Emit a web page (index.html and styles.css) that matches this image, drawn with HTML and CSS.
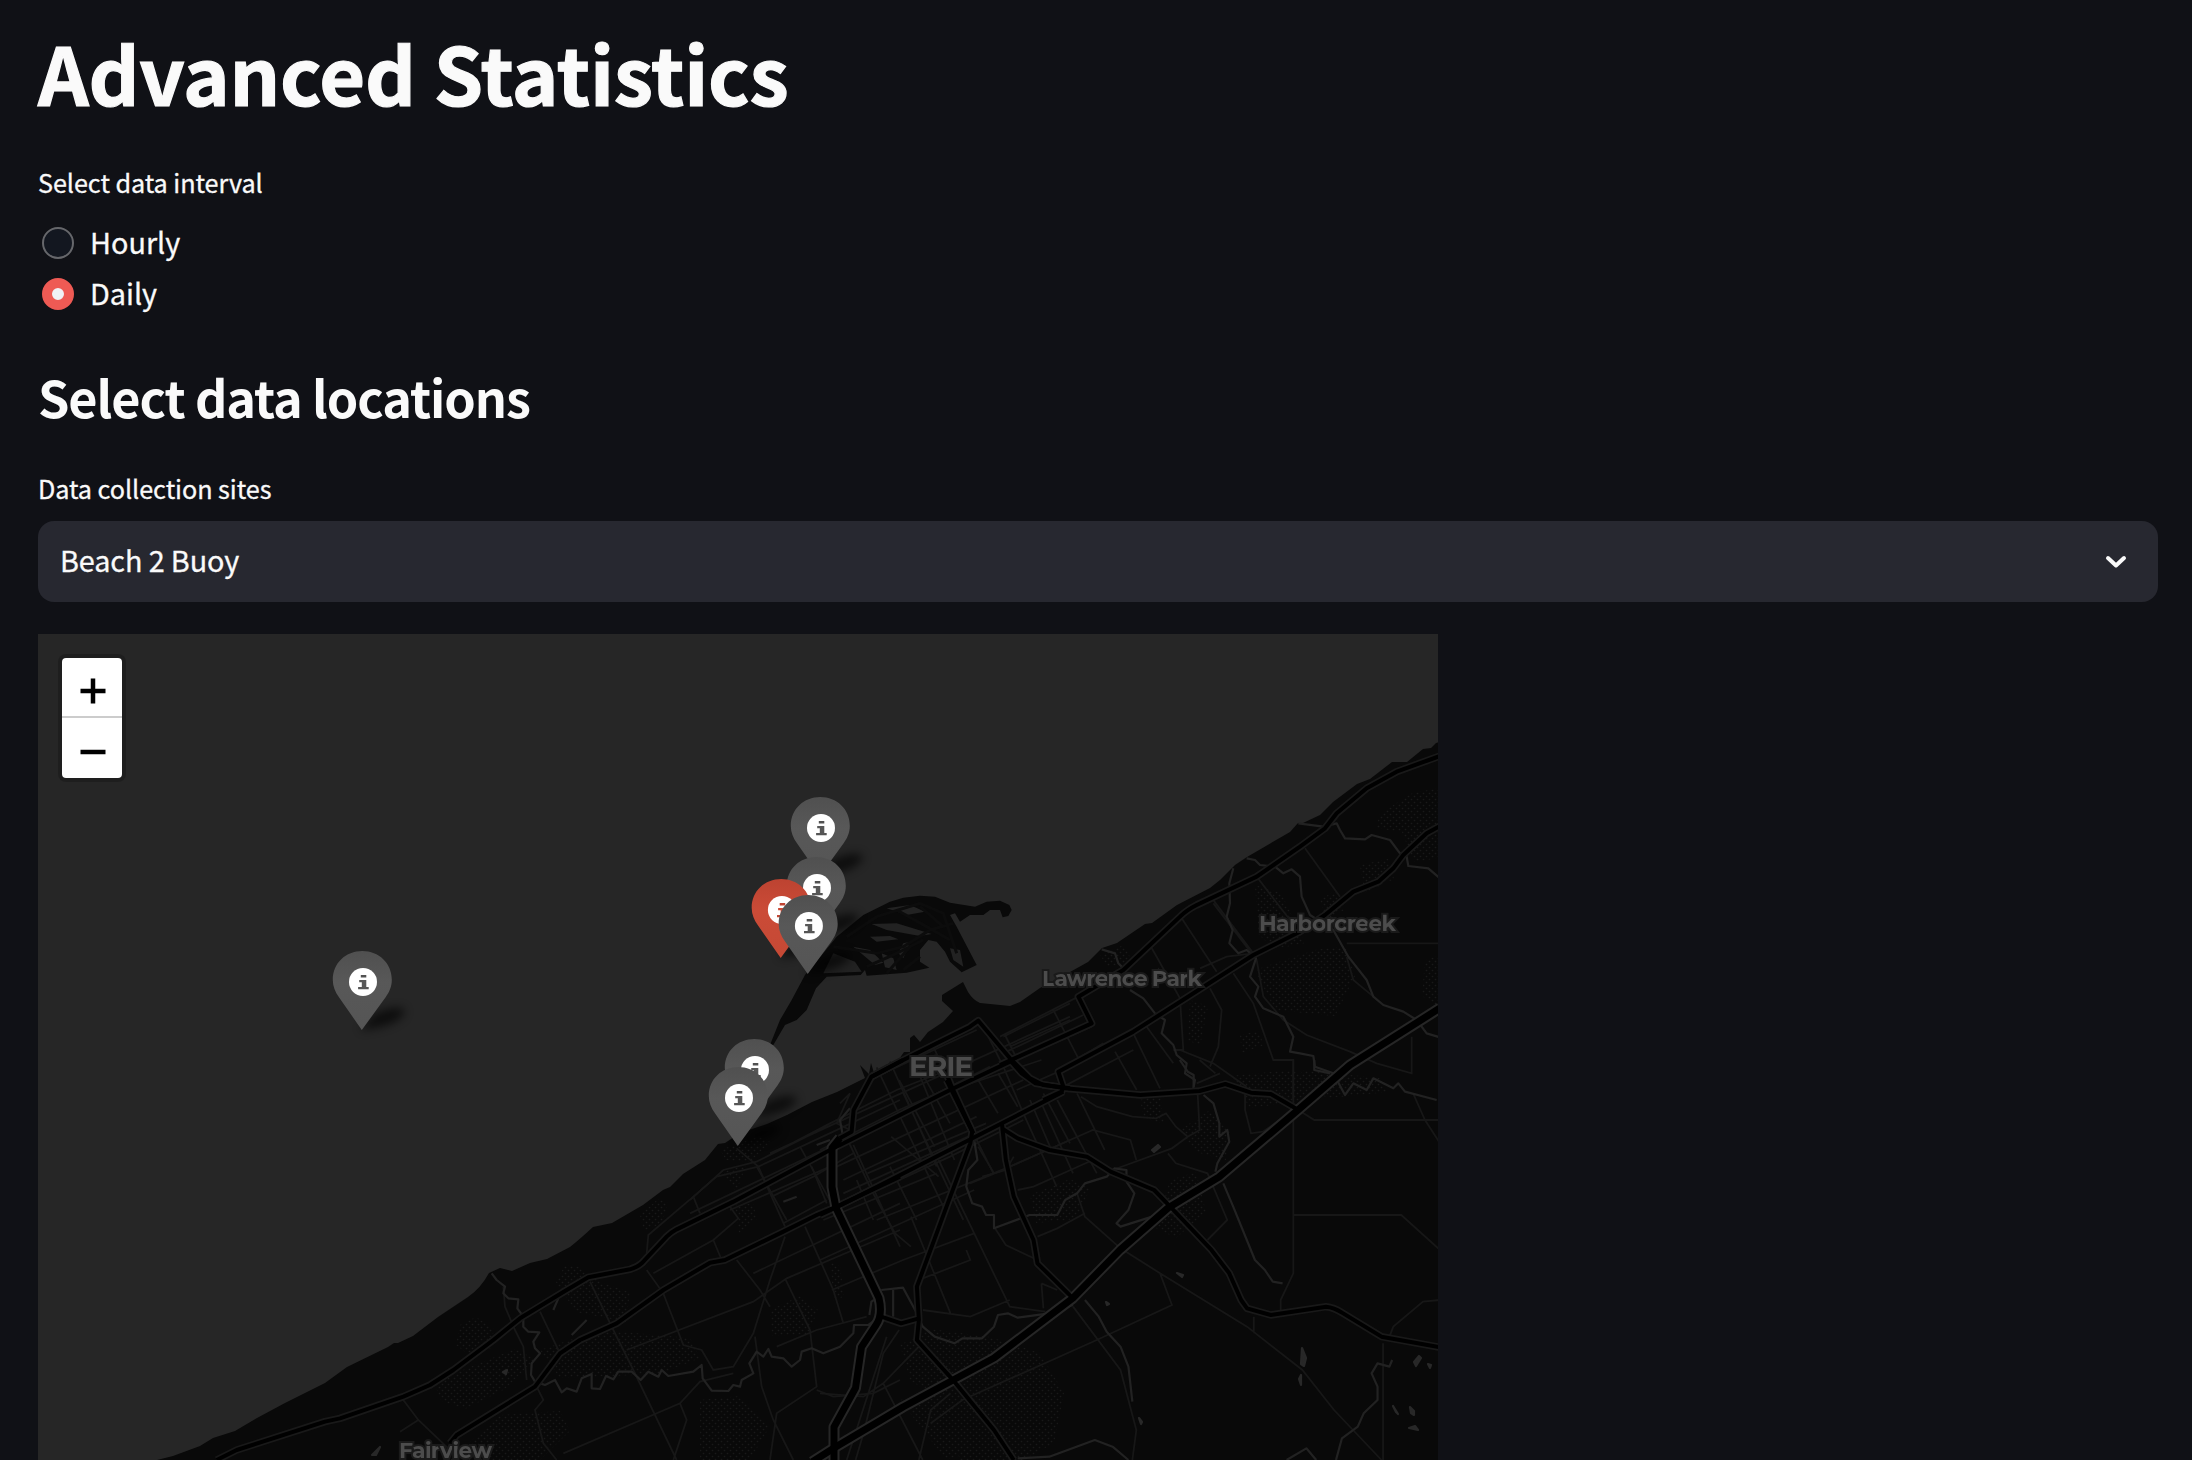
FILE: index.html
```html
<!DOCTYPE html>
<html lang="en">
<head>
<meta charset="utf-8">
<title>Advanced Statistics</title>
<link rel="stylesheet" href="styles.css">
</head>
<body>
<main class="page">
  <h1 class="title">Advanced Statistics</h1>

  <div class="radio-group" role="radiogroup">
    <div class="label">Select data interval</div>
    <div class="option"><span class="radio"></span><span>Hourly</span></div>
    <div class="option"><span class="radio checked"></span><span>Daily</span></div>
  </div>

  <h2 class="subtitle">Select data locations</h2>

  <div class="label site-label">Data collection sites</div>
  <div class="select">
    <span class="value">Beach 2 Buoy</span>
    <svg class="chevron" width="22" height="14" viewBox="0 0 22 14"><path d="M3 3l8 7.5L19 3"/></svg>
  </div>

  <div class="map">
    <svg class="tiles" width="1400" height="826" viewBox="38 634 1400 826">
      <defs>
        <pattern id="woods" width="6" height="6" patternUnits="userSpaceOnUse">
          <circle cx="1.5" cy="1.5" r=".8" fill="#191919"/><circle cx="4.5" cy="4.5" r=".8" fill="#191919"/>
        </pattern>
        <filter id="soft" x="-50%" y="-50%" width="200%" height="200%"><feGaussianBlur stdDeviation="5"/></filter>
        <linearGradient id="grey" x1="0" y1="0" x2="0" y2="1"><stop offset="0" stop-color="#505050"/><stop offset=".4" stop-color="#585858"/><stop offset="1" stop-color="#555"/></linearGradient>
        <linearGradient id="red" x1="0" y1="0" x2="0" y2="1"><stop offset="0" stop-color="#bd4331"/><stop offset=".4" stop-color="#cb4b37"/><stop offset="1" stop-color="#c54935"/></linearGradient>

        <g id="roads">
          <g transform="translate(400 1060) scale(.33333)">
            <path d="M-550 1200L-490 1170L-225 1085L-180 1075L10 1010L90 975L160 930L280 840L360 775L500 690L565 652L690 628Q712 622 725 610L800 530Q812 518 830 508L1000 425L1290 270L1650 90L1830 5"/>
            <path d="M150 1150L170 1125L405 980L480 880L540 840L650 790L790 690L930 608L975 600L1150 515L1250 465L1310 440L1500 350"/>
          </g>
          <g transform="translate(1000 730) scale(.33333)">
            <path d="M0 1005L275 880L235 800L370 720L540 560Q560 540 590 525L770 440L900 350L975 295L1010 250L1100 175L1190 125L1320 78"/>
            <path d="M130 1110L185 1085L190 1070L175 1025L400 905L760 675L900 605L975 555L1060 485L1135 455L1180 415L1210 375L1280 310L1320 288"/>
          </g>
          <g transform="translate(820 1060) scale(.39541 .33333)">
            <path d="M0 465L45 440L460 190L615 95"/>
            <path d="M480 0L510 40L545 70L620 85L810 105L960 93L1025 72L1090 98L1140 102L1210 150"/>
            <path d="M320 60L385 215L380 250L320 440L245 680L250 780L245 840L340 965L440 1110L490 1200"/>
            <path d="M460 190L470 300L490 410L540 540L550 610L640 715"/>
            <path d="M460 205L500 235L580 270L675 290L735 335L845 390L890 445L990 570L1035 640L1065 720L1080 745L1140 765L1280 740Q1300 742 1320 758L1420 830L1568 862"/>
            <path d="M155 770L205 790L250 775M50 235L80 215L85 150L130 50L210 0"/>
          </g>
          <g transform="translate(690 980) scale(.33333)">
            <path d="M545 290L640 240L740 190L840 140L865 122L960 235L1020 295L1060 315L1140 325M765 270L785 320L850 460"/>
          </g>
        </g>
        <g id="highways">
          <path d="M834 1460V1427L855.500 1388L861.500 1347L876 1325Q883 1315 879 1298L836 1208L832 1187V1148L840 1138"/>
          <path d="M812 1462L834 1448L903 1407L994 1358L1073 1298L1120 1250L1168 1208L1219 1177L1298 1110L1350 1065L1440 1008"/>
        </g>

        <g id="pin-mark">
          <circle cx="1.200" cy="-48" r="14" fill="#fff"/>
          <path d="M-1 -55h5.500v2.500H-1zM-2.600 -50h7.100v7h2.400v2.200H-3.700V-43H0v-4.800h-2.600z"/>
        </g>
        <path id="pin-body" d="M0 0L-23 -33C-26.500 -38 -29 -43.500 -29 -50C-29 -67 -16 -79 .5 -79S30 -67 30 -50C30 -43.500 27.500 -38 24 -33Z"/>
        <path id="pin-shadow" d="M-2 0L11 -15Q30 -25 42 -21Q46 -14 28 -6Q14 -1 -2 0Z"/>
      </defs>

      <g class="basemap">
      <path class="land" d="M157 1460L173 1456L200 1446L213 1438L235 1431L257 1418L285 1403L325 1383L347 1367L388 1347L394 1343L398 1343L413 1336L438 1317L468 1297Q481 1288 489 1273L500 1268L512 1271L530 1263L547 1259L570 1247Q580 1239 593 1227L612 1223L643 1205L663 1190L670 1187L683 1174L705 1160L718 1144L725 1143L740 1133L767 1124L787 1115L812 1102L837 1092L865 1078L860 1065L869 1074L871 1063L874 1073L897 1062L904 1052L910 1052V1038L914 1035L920 1042L928 1032L943 1022L953 1011L942 1001V995L963 982L968 992Q973 1000 980 1003L1010 1006L1020 1002L1040 988L1070 972L1088 962L1102 948L1117 943L1145 924L1152 923L1177 905L1210 888L1220 880L1235 865L1247 857L1290 832L1298 823H1303L1320 815L1333 802L1357 784L1370 779L1392 762H1407L1423 749L1431 748L1436 743L1446 740V1470H157Z"/>

      <g transform="translate(690 780) scale(.33333)">
        <path class="land" d="M240 795L270 720L305 660L345 585L400 520L440 470L520 405L600 365L640 353L690 347L735 350L780 368L855 380L890 365L930 362L958 375L965 390L955 408L938 412L930 390L900 390L880 405L840 405L810 425L795 400L780 405L800 440L860 555L815 577L780 545L765 515L740 485L715 480L690 510L690 545L718 563L650 578L530 587L525 570L512 585L410 590L378 625L350 690L320 720L285 735L250 795Z"/>
        <path class="water" d="M430 520L495 545L515 575L400 580ZM545 432L620 430L725 462L690 468L590 450ZM490 500L540 510L580 548L555 555ZM590 385L660 375L705 395L650 405ZM575 520L610 535L620 570L585 562ZM780 505L810 510L820 560L790 540ZM540 470L600 468L625 478L560 485ZM640 490L660 485L640 535L625 520Z"/>
        <path class="ink" d="M430 500L560 520L640 500L720 450L790 430M470 470L560 410L690 370L760 400L800 520M530 560L610 525L700 480M590 580L660 500M690 380L760 440M620 390L710 440L780 480M640 570L690 530"/>
      </g>

      <g class="woods" fill="url(#woods)">
        <path d="M460 1325l16-8 18 12-4 20-18 8-16-12zM435 1385l30-16 50-20 20 10-30 30-40 20-24-8zM500 1415l60-4 10 20-30 29h-90zM565 1265l15 2 20 15 30 10-4 30-50-10-20-30zM640 1215l18-16 10 4-6 20-18 8zM720 1150l40-14 10 6-20 20-24-2zM720 1170l26-4-10 26zM735 1205l18-2 4 16-18 14zM540 1350l60-20 90 8 10 20-40 16-100 4zM770 1310l30-14 18 14-10 24-36 2zM700 1400l40-4 30 30-20 34h-50zM830 1262l10 4 4 30-10 6z"/>
        <path d="M900 1345l30-16 60 8 50 16 24 40-10 50-30 17H960l-20-60-30-20zM900 1400l60-10 16 60-30 10zM1030 1195l40-16 20 10-14 30-40 4zM1180 1130l30-20 20 20-4 30-30-8zM1170 1180l26-8 10 40-30 26-20-10zM1230 1076l60-6 30 10-10 20-60 8zM1300 1070l80 8 8 14-60 6-20-10zM1380 814l30-20 28-6v70l-24 4-12-30-26-4zM1360 865l28-6 6 20-30 14zM1255 885l26 8 24 50-30 6-16-14zM1255 970l60-20 30-4 10 30-20 40-60-6zM1320 900l16-10 8 20-18 10zM1240 1035l18-4 6 14-22 8zM1190 1000l18 6-8 40-12-6zM1100 955l24-10 8 16-24 6zM1140 1100l20-6 4 30-20-6zM1425 960l13-4v50l-16-10z"/>
      </g>

      <g class="minor">
        <g transform="translate(400 1060) scale(.33333)">
          <path d="M10 1020L55 1080L155 1175M0 1115L55 1080M310 680L315 740L345 810L370 860L380 960M420 755L475 870M570 665L640 810L700 930L830 1200M740 630L790 700L850 855L905 870L940 930L1000 920L1060 820L1110 660L1155 530M680 870L1060 725L1160 655L1500 510M740 580L745 525L880 410L950 350L1075 320L1300 215L1500 120M880 410L900 460M940 540L965 600M1010 265L1075 320L1155 500M1010 600L1080 690L1110 740M1115 410L1240 350L1360 280M1150 490L1280 420M1155 655L1230 810L1250 980L1130 1060L1110 1200M1065 830L1085 980L1120 1080L1180 1200M1215 500L1300 690L1330 790M1235 320L1280 430M1360 255L1500 560M1060 640L1500 430M470 1200L430 1150L405 1050L430 1020L410 980M490 1180L840 1030L900 965L1000 940M840 1030L860 1080L820 1200M990 440L1015 475L940 540L760 640M1130 860L1250 810L1400 770M1250 990L1300 1010L1420 1000L1500 960M1340 1200L1460 830"/>
        </g>
        <g transform="translate(690 980) scale(.33333)">
          <path d="M0 660L100 570L200 545L360 465L600 355L1140 110M210 540L420 430L620 330L850 240M240 520L480 410M560 262L640 430L760 680M600 245L740 560M640 340L820 720M200 560L290 720M330 500L430 680M440 560L1000 300M460 600L860 410M460 640L900 440M540 640L780 530L1000 420M450 370L480 340L440 430L480 450M680 250L780 430M730 200L860 480L910 580M560 720L960 560M890 160L940 260L1000 400L1100 620M940 170L1140 70M960 200L1140 120M980 330L1140 260M1020 360L1080 500M1060 340L1140 490M840 610L940 570M500 600L550 720M0 700L420 500M960 560L1140 480"/>
          <path d="M120 690L420 560M400 720L740 580M600 560L680 720M640 390L900 260M580 280L860 150"/>
        </g>
        <g transform="translate(1000 730) scale(.33333)">
          <path d="M0 920L235 800M20 965L250 855M15 915L45 975M160 840L235 985L310 940M60 985L275 890M545 565L650 725M450 645L540 805L550 960L520 960M640 510L760 670M770 440L870 570M915 355L1020 500M1040 640H1320M600 715L680 680L760 670M630 775L665 840L655 950L630 1010M700 730L760 820L820 990H880V1110M400 910L480 1075M345 965L410 1080M440 890L520 1000M540 960L640 1000L740 1070M640 520L770 690L790 800L850 870L920 915L1050 965L1130 1000L1235 1030V920M1040 680L1060 750L1120 800M190 1070L400 960M590 1060L660 1030"/>
        </g>
        <g transform="translate(820 1060) scale(.39541 .33333)">
          <path d="M1197 0V640L1165 720V750M1197 465H1470L1568 570M1210 150L1250 180H1568M1500 100L1530 180L1568 250M960 0L1000 40M0 600L390 390M30 690L210 600L390 520M70 240L130 390L190 520L230 560M230 470L330 760M300 300L480 740L570 755M440 500L470 555L550 600M480 320L690 210L785 240L800 300M400 260L440 340M490 290L470 330L410 350M600 120L700 340M650 100L720 270M560 130L640 340M660 110L700 140L790 170L850 175L875 160L900 200L930 230L960 210L955 100M930 230L890 265L740 330M500 390L540 380L690 300M550 530L600 505L670 460M650 400L670 470L760 565L860 640L1080 800L1220 930L1300 1050L1420 1200M860 640L890 735L700 840L360 1020L280 1090M640 740L760 930L800 1110L790 1200M560 670L565 745M560 670L600 690M260 750L380 770L480 720M370 570L380 600L260 655M880 280L900 310L980 340L1030 480L980 540M1075 100V150L1090 220L1120 215L1200 150M1424 850V1200M1440 830L1450 800L1525 725L1568 720M1097 770V820M160 970L260 1200M250 860L160 970L110 1010L0 1000M200 810L160 880L110 1120L90 1200M330 1000L280 1050L250 1200M0 270L200 150L450 20M400 60L450 160M450 40L500 140M330 90L560 0M120 340L420 190M180 230L300 350M200 60L290 260M250 40L340 300"/>
        </g>
      </g>

      <g class="streams">
        <g transform="translate(400 1060) scale(.33333)">
          <path d="M275 640L290 660L315 680L310 700L325 715L355 718L352 745L370 770L370 800L385 815L418 817L400 845L405 865L420 880L395 910L393 945L405 965L435 975L465 960L485 997L500 985L530 995L545 955L575 942V985L600 987L618 948L640 958L655 935H695L722 960L745 935L775 950L785 930L805 948L880 935L905 915L908 955L935 992L985 993L1000 975L1020 980L1025 960L1060 940L1048 910L1070 875L1090 890L1105 867L1115 890L1150 895L1175 920L1200 900L1205 875L1235 865L1270 880L1320 860L1360 820L1362 795L1405 795L1440 770"/>
          <path d="M1290 270L1330 235L1320 180L1350 145M1250 255L1290 240M460 750L475 715M515 825L560 780M1150 425L1190 410"/>
        </g>
        <g transform="translate(1000 730) scale(.33333)">
          <path d="M305 658L345 670L355 700L370 715M390 780L430 805L465 850L495 870L485 910L520 945L530 975L560 1000L555 1030L585 1050L580 1075"/>
          <path d="M700 415L688 460L690 520L680 560L698 600L688 640L715 670L740 660L768 685L750 740L775 770L765 800L790 835L850 860L880 920L870 965L900 970L940 978L945 1010L1000 1030L1035 1095L1060 1060L1100 1080L1120 1045L1180 1075L1195 1060L1215 1085L1310 1110"/>
          <path d="M740 385L765 390L780 405L825 410L850 430L875 418L900 440L905 500L930 555L1000 600L1045 680L1100 750L1120 800L1150 825L1210 845L1250 870L1280 910L1320 922"/>
          <path d="M895 280L970 290L1010 280L1020 300L1035 325L1095 328L1115 315L1170 330L1200 370L1220 380L1225 408L1285 415L1320 445"/>
        </g>
        <g transform="translate(820 1060) scale(.39541 .33333)">
          <path d="M910 0L930 35L945 45V80M970 105L995 130L1010 190V230L1030 210L1035 245L1005 310L1000 335M1020 370L1045 440L1100 600L1125 630L1145 665L1170 670"/>
          <path d="M390 240L398 300L375 330L370 380L385 430L410 440L420 465L440 465V505L530 465L600 465L620 420L650 400L670 370L725 350L745 325L775 330V365L795 400L780 450L750 490L760 500L880 455"/>
          <path d="M155 690L210 683L245 760L260 800L290 830L340 850L360 835L410 835L440 800L450 765L475 760L500 773L580 760L640 735M670 720L705 770L725 815L760 860L780 920L790 1025M500 1195L580 1190L695 1140L740 1160L780 1200M1180 1200L1230 1165L1255 1200M1305 1200L1320 1135L1360 1100L1375 1060L1410 1020V980L1395 940L1410 910L1440 920L1447 900M1250 0V30L1290 40M125 765L130 725L150 710M185 690V770"/>
        </g>
        <path class="ponds" d="M1152 1150l6-5 2 2-6 5zM1177 1273l6 2-1 2zM1302 1348l4 10-2 8-3-2zM1299 1379l2-4v10zM1414 1362l5-6 2 2-5 8zM1428 1364l3 1-1 3zM1393 1406l5 8-2-2zM1410 1407l4 4v4l-3-2zM1409 1428l6-2 3 4zM1106 1302l3 2-2 1zM1139 1418l3 4-1 2zM503 1372l4-2-1 4zM372 1455l8-8-4 8z"/>
      </g>

      <use href="#roads" class="casing"/>
      <use href="#highways" class="highway-casing"/>
      <use href="#roads" class="core"/>
      <use href="#highways" class="highway-core"/>

      <g class="places">
        <text x="1259" y="931" textLength="137">Harborcreek</text>
        <text x="1042" y="985.500" textLength="160">Lawrence Park</text>
        <text class="city" x="909" y="1075.500" textLength="64">ERIE</text>
        <text x="399" y="1458" textLength="93">Fairview</text>
      </g>
      </g>

      <g filter="url(#soft)" opacity=".65">
        <use href="#pin-shadow" x="819.800" y="876"/><use href="#pin-shadow" x="815.800" y="936"/><use href="#pin-shadow" x="780.700" y="958"/><use href="#pin-shadow" x="807.700" y="974"/><use href="#pin-shadow" x="361.800" y="1030"/><use href="#pin-shadow" x="753.800" y="1118"/><use href="#pin-shadow" x="737.800" y="1146"/>
      </g>
      <g class="pin" transform="translate(819.800 876)"><use href="#pin-body"/><use href="#pin-mark"/></g>
      <g class="pin" transform="translate(815.800 936)"><use href="#pin-body"/><use href="#pin-mark"/></g>
      <g class="pin selected" transform="translate(780.700 958)"><use href="#pin-body"/><use href="#pin-mark"/></g>
      <g class="pin" transform="translate(807.700 974)"><use href="#pin-body"/><use href="#pin-mark"/></g>
      <g class="pin" transform="translate(361.800 1030)"><use href="#pin-body"/><use href="#pin-mark"/></g>
      <g class="pin" transform="translate(753.800 1118)"><use href="#pin-body"/><use href="#pin-mark"/></g>
      <g class="pin" transform="translate(737.800 1146)"><use href="#pin-body"/><use href="#pin-mark"/></g>
    </svg>
    <div class="zoom">
      <div class="zoom-button"><svg width="26" height="26" viewBox="0 0 26 26"><path d="M.5 13h25M13 .5v25"/></svg></div>
      <div class="zoom-button"><svg width="26" height="26" viewBox="0 0 26 26"><path d="M.5 13h25"/></svg></div>
    </div>
  </div>
</main>
</body>
</html>
```

FILE: styles.css
```css
* { box-sizing: border-box; }
body {
  margin: 0;
  height: 1460px;
  overflow: hidden;
  background: #101116;
  color: #fafafa;
  font-family: "Noto Sans CJK SC", "Noto Sans", sans-serif;
  -webkit-text-stroke: .3px #fafafa;
}
.page { padding: 0 34px 0 38px; }
.title {
  margin: 0;
  padding-top: 19px;
  height: 162px;
  font-size: 79.200px;
  line-height: 106px;
  font-weight: 700;
  letter-spacing: -.2px;
  white-space: nowrap;
  -webkit-text-stroke-width: 1.200px;
}
.label {
  height: 40px;
  font-size: 25.200px;
  line-height: 40px;
  letter-spacing: -.05px;
}
.option {
  display: flex;
  align-items: center;
  gap: 16px;
  height: 51px;
  padding-left: 4px;
  font-size: 28.800px;
}
.option span:last-child { margin-top: -2px; }
.label + .option { margin-top: 15px; }
.radio {
  width: 32px;
  height: 32px;
  border: 2px solid #66676b;
  border-radius: 50%;
  background: #131720;
}
.radio.checked { border: 10px solid #ee5a54; background: #f0f2f6; }
.subtitle {
  margin: 0;
  padding-top: 38px;
  height: 149px;
  font-size: 50.400px;
  line-height: 80px;
  font-weight: 700;
  letter-spacing: -1.080px;
  white-space: nowrap;
  -webkit-text-stroke-width: 0;
}
.site-label { height: 53px; }
.select {
  display: flex;
  align-items: center;
  justify-content: space-between;
  height: 81px;
  padding: 0 31px 0 22px;
  border-radius: 16px;
  background: #272830;
  font-size: 28.800px;
}
.value { margin-top: -4px; letter-spacing: -.1px; }
.chevron path { fill: none; stroke: #fafafa; stroke-width: 4; stroke-linecap: round; stroke-linejoin: round; }
.map {
  position: relative;
  width: 1400px;
  height: 826px;
  margin-top: 32px;
  overflow: hidden;
  background: #262626;
}
.tiles { display: block; -webkit-text-stroke-width: 0; }
.tiles path { vector-effect: non-scaling-stroke; }
.basemap { filter: blur(.7px); }
.land { fill: #090909; }
.water { fill: #222; }
.ink { fill: none; stroke: #0c0c0c; stroke-width: 3; }
.minor { fill: none; stroke: #171717; stroke-width: 1.800; }
.streams { fill: none; stroke: #222; stroke-width: 2.200; stroke-linejoin: round; }
.ponds { fill: #282828; stroke: #282828; }
.casing, .core, .highway-casing, .highway-core { fill: none; stroke-linejoin: round; }
.casing { stroke: #191919; stroke-width: 7.500; }
.core { stroke: #000; stroke-width: 4; }
.highway-casing { stroke: #262626; stroke-width: 11; }
.highway-core { stroke: #000; stroke-width: 7; }
.places {
  fill: #4c4c4c;
  stroke: #1a1a1a;
  stroke-width: 4;
  paint-order: stroke;
  font-family: Montserrat, Inter, sans-serif;
  font-size: 22px;
  font-weight: 700;
}
.city { font-size: 28px; }
.pin { fill: url(#grey); }
.pin.selected { fill: url(#red); }
.pin #pin-mark path { fill: #555; }
.zoom {
  position: absolute;
  left: 20px;
  top: 20px;
  width: 68px;
  border: 4px solid rgba(0, 0, 0, .2);
  border-radius: 8px;
  background: #fff;
  background-clip: padding-box;
}
.zoom-button {
  display: flex;
  align-items: center;
  justify-content: center;
  height: 60px;
  padding: 8px 0 0 2px;
}
.zoom-button:first-child { border-bottom: 2px solid #ccc; }
.zoom-button path { stroke: #000; stroke-width: 4.500; }
```
